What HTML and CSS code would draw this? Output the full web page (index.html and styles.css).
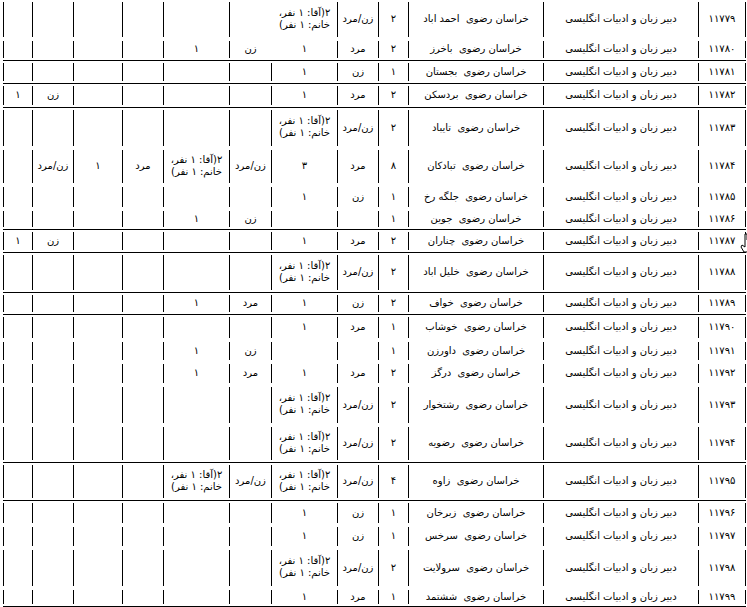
FILE: index.html
```html
<!DOCTYPE html>
<html lang="fa">
<head>
<meta charset="utf-8">
<title>جدول رشته محل‌ها</title>
<link rel="stylesheet" href="styles.css">
</head>
<body>
<div class="table">
  <div class="group">
    <div class="row h39"><div>۱۱۷۷۹</div><div>دبیر زبان و ادبیات انگلیسی</div><div>خراسان رضوی&nbsp; احمد اباد</div><div>۲</div><div>زن/مرد</div><div class="two">۲(آقا: ۱ نفر،<br>خانم: ۱ نفر)</div><div class="nb"></div><div></div><div></div><div></div><div></div><div></div></div>
    <div class="row h21"><div>۱۱۷۸۰</div><div>دبیر زبان و ادبیات انگلیسی</div><div>خراسان رضوی&nbsp; باخرز</div><div>۲</div><div>مرد</div><div>۱</div><div class="nb">زن</div><div>۱</div><div></div><div></div><div></div><div></div></div>
  </div>
  <div class="group">
    <div class="row h22"><div>۱۱۷۸۱</div><div>دبیر زبان و ادبیات انگلیسی</div><div>خراسان رضوی&nbsp; بجستان</div><div>۱</div><div>زن</div><div>۱</div><div></div><div></div><div></div><div></div><div></div><div></div></div>
  </div>
  <div class="group">
    <div class="row h23"><div>۱۱۷۸۲</div><div>دبیر زبان و ادبیات انگلیسی</div><div>خراسان رضوی&nbsp; بردسکن</div><div>۲</div><div>مرد</div><div>۱</div><div></div><div></div><div></div><div></div><div>زن</div><div>۱</div></div>
  </div>
  <div class="group">
    <div class="row h40"><div>۱۱۷۸۳</div><div>دبیر زبان و ادبیات انگلیسی</div><div>خراسان رضوی&nbsp; تایباد</div><div>۲</div><div>زن/مرد</div><div class="two">۲(آقا: ۱ نفر،<br>خانم: ۱ نفر)</div><div></div><div></div><div></div><div></div><div></div><div></div></div>
    <div class="row h37"><div>۱۱۷۸۴</div><div>دبیر زبان و ادبیات انگلیسی</div><div>خراسان رضوی&nbsp; تبادکان</div><div>۸</div><div>مرد</div><div>۳</div><div>زن/مرد</div><div class="two">۲(آقا: ۱ نفر،<br>خانم: ۱ نفر)</div><div>مرد</div><div>۱</div><div>زن/مرد</div><div></div></div>
    <div class="row h24"><div>۱۱۷۸۵</div><div>دبیر زبان و ادبیات انگلیسی</div><div>خراسان رضوی&nbsp; جلگه رخ</div><div>۱</div><div>زن</div><div>۱</div><div></div><div></div><div></div><div></div><div></div><div></div></div>
    <div class="row h20"><div>۱۱۷۸۶</div><div>دبیر زبان و ادبیات انگلیسی</div><div>خراسان رضوی&nbsp; جوین</div><div>۱</div><div></div><div></div><div>زن</div><div>۱</div><div></div><div></div><div></div><div></div></div>
  </div>
  <div class="group">
    <div class="row h22"><div>۱۱۷۸۷</div><div>دبیر زبان و ادبیات انگلیسی</div><div>خراسان رضوی&nbsp; چناران</div><div>۲</div><div>مرد</div><div>۱</div><div></div><div></div><div></div><div></div><div>زن</div><div>۱</div></div>
  </div>
  <div class="group">
    <div class="row h39"><div>۱۱۷۸۸</div><div>دبیر زبان و ادبیات انگلیسی</div><div>خراسان رضوی&nbsp; خلیل اباد</div><div>۲</div><div>زن/مرد</div><div class="two">۲(آقا: ۱ نفر،<br>خانم: ۱ نفر)</div><div></div><div></div><div></div><div></div><div></div><div></div></div>
  </div>
  <div class="group">
    <div class="row h21"><div>۱۱۷۸۹</div><div>دبیر زبان و ادبیات انگلیسی</div><div>خراسان رضوی&nbsp; خواف</div><div>۲</div><div>زن</div><div>۱</div><div>مرد</div><div>۱</div><div></div><div></div><div></div><div></div></div>
  </div>
  <div class="group">
    <div class="row h25"><div>۱۱۷۹۰</div><div>دبیر زبان و ادبیات انگلیسی</div><div>خراسان رضوی&nbsp; خوشاب</div><div>۱</div><div>مرد</div><div>۱</div><div></div><div></div><div></div><div></div><div></div><div></div></div>
    <div class="row h22"><div>۱۱۷۹۱</div><div>دبیر زبان و ادبیات انگلیسی</div><div>خراسان رضوی&nbsp; داورزن</div><div>۱</div><div></div><div></div><div>زن</div><div>۱</div><div></div><div></div><div></div><div></div></div>
    <div class="row h23"><div>۱۱۷۹۲</div><div>دبیر زبان و ادبیات انگلیسی</div><div>خراسان رضوی&nbsp; درگز</div><div>۲</div><div>مرد</div><div>۱</div><div>مرد</div><div>۱</div><div></div><div></div><div></div><div></div></div>
    <div class="row h40"><div>۱۱۷۹۳</div><div>دبیر زبان و ادبیات انگلیسی</div><div>خراسان رضوی&nbsp; رشتخوار</div><div>۲</div><div>زن/مرد</div><div class="two">۲(آقا: ۱ نفر،<br>خانم: ۱ نفر)</div><div></div><div></div><div></div><div></div><div></div><div></div></div>
    <div class="row h37"><div>۱۱۷۹۴</div><div>دبیر زبان و ادبیات انگلیسی</div><div>خراسان رضوی&nbsp; رضویه</div><div>۲</div><div>زن/مرد</div><div class="two">۲(آقا: ۱ نفر،<br>خانم: ۱ نفر)</div><div></div><div></div><div></div><div></div><div></div><div></div></div>
  </div>
  <div class="group">
    <div class="row h37"><div>۱۱۷۹۵</div><div>دبیر زبان و ادبیات انگلیسی</div><div>خراسان رضوی&nbsp; زاوه</div><div>۴</div><div>زن/مرد</div><div class="two">۲(آقا: ۱ نفر،<br>خانم: ۱ نفر)</div><div>زن/مرد</div><div class="two">۲(آقا: ۱ نفر،<br>خانم: ۱ نفر)</div><div></div><div></div><div></div><div></div></div>
  </div>
  <div class="group">
    <div class="row h24"><div>۱۱۷۹۶</div><div>دبیر زبان و ادبیات انگلیسی</div><div>خراسان رضوی&nbsp; زبرخان</div><div>۱</div><div>زن</div><div>۱</div><div></div><div></div><div></div><div></div><div></div><div></div></div>
    <div class="row h23"><div>۱۱۷۹۷</div><div>دبیر زبان و ادبیات انگلیسی</div><div>خراسان رضوی&nbsp; سرخس</div><div>۱</div><div>زن</div><div>۱</div><div></div><div></div><div></div><div></div><div></div><div></div></div>
    <div class="row h40"><div>۱۱۷۹۸</div><div>دبیر زبان و ادبیات انگلیسی</div><div>خراسان رضوی&nbsp; سرولایت</div><div>۲</div><div>زن/مرد</div><div class="two">۲(آقا: ۱ نفر،<br>خانم: ۱ نفر)</div><div></div><div></div><div></div><div></div><div></div><div></div></div>
    <div class="row h18"><div>۱۱۷۹۹</div><div>دبیر زبان و ادبیات انگلیسی</div><div>خراسان رضوی&nbsp; ششتمد</div><div>۱</div><div>مرد</div><div>۱</div><div></div><div></div><div></div><div></div><div></div><div></div></div>
  </div>
</div>
<svg class="cursor" width="10" height="20" viewBox="0 0 10 20" aria-hidden="true">
  <path d="M5 1 L7 1 L7 7 L9 7 L9 16 L7 19 L4 19 L1 14 L2 12 L5 14 Z" fill="#fff" stroke="#000" stroke-width="1"/>
</svg>
</body>
</html>
```
FILE: styles.css
```css
html, body {
  margin: 0;
  padding: 0;
  background: #fff;
}

body {
  font-family: "DejaVu Sans", sans-serif;
  font-size: 10px;
  color: #000;
  overflow: hidden;
}

.table {
  margin-left: 3px;
  width: 743px;
  direction: rtl;
}

.group {
  border-bottom: 1px solid #000;
}

.row {
  display: grid;
  grid-template-columns: 47px 155px 135px 30px 41px 66px 42px 66px 41px 49px 41px 30px;
  padding: 2px 0;
  box-sizing: border-box;
}

.row > div {
  border-right: 1px solid #000;
  display: flex;
  align-items: center;
  justify-content: center;
  text-align: center;
  white-space: nowrap;
  padding-bottom: 2px;
  box-sizing: border-box;
}

.row > div:last-child {
  border-left: 1px solid #000;
}

.row > div.nb {
  border-right-color: transparent;
}

.row > div.two {
  line-height: 12px;
}

.h18 { height: 18px; }
.h20 { height: 20px; }
.h21 { height: 21px; }
.h22 { height: 22px; }
.h23 { height: 23px; }
.h24 { height: 24px; }
.h25 { height: 25px; }
.h37 { height: 37px; }
.h39 { height: 39px; }
.h40 { height: 40px; }

.cursor {
  position: absolute;
  left: 740px;
  top: 233px;
}
```
